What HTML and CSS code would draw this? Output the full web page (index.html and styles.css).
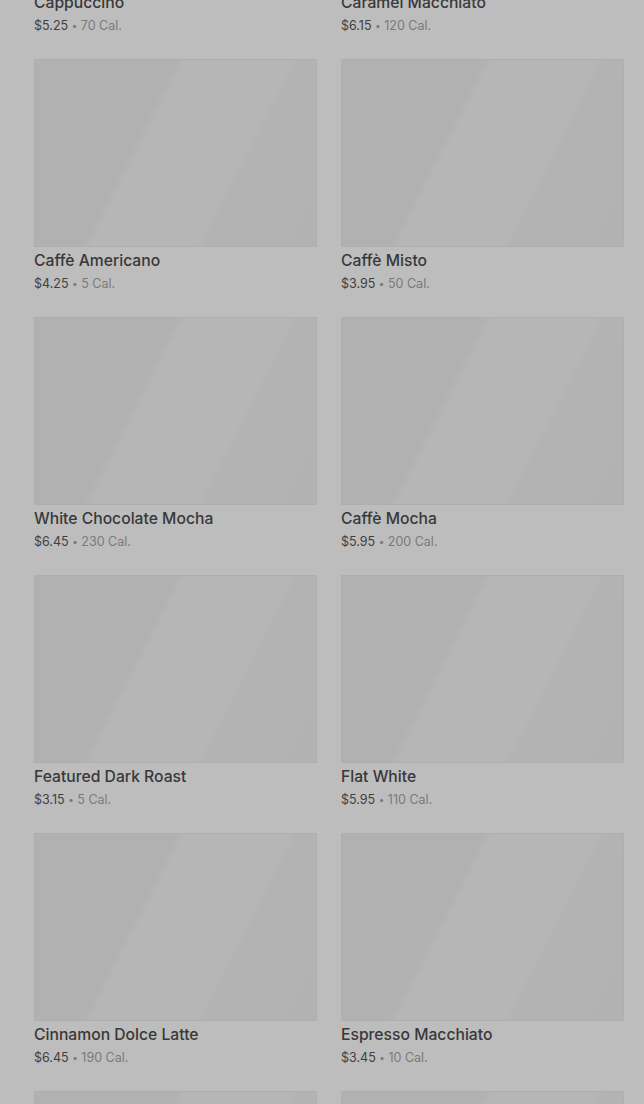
FILE: index.html
```html
<!DOCTYPE html>
<html lang="en">
<head>
<meta charset="utf-8">
<title>Menu</title>
<link rel="stylesheet" href="styles.css">
</head>
<body>
<main class="page">
  <ul class="grid">
    <li class="card"><div class="thumb"></div><h3 class="name">Cappuccino</h3><p class="meta"><span class="price">$5.25</span> <span class="dot">•</span> <span class="cal">70 Cal.</span></p></li>
    <li class="card"><div class="thumb"></div><h3 class="name">Caramel Macchiato</h3><p class="meta"><span class="price">$6.15</span> <span class="dot">•</span> <span class="cal">120 Cal.</span></p></li>
    <li class="card"><div class="thumb"></div><h3 class="name">Caffè Americano</h3><p class="meta"><span class="price">$4.25</span> <span class="dot">•</span> <span class="cal">5 Cal.</span></p></li>
    <li class="card"><div class="thumb"></div><h3 class="name">Caffè Misto</h3><p class="meta"><span class="price">$3.95</span> <span class="dot">•</span> <span class="cal">50 Cal.</span></p></li>
    <li class="card"><div class="thumb"></div><h3 class="name">White Chocolate Mocha</h3><p class="meta"><span class="price">$6.45</span> <span class="dot">•</span> <span class="cal">230 Cal.</span></p></li>
    <li class="card"><div class="thumb"></div><h3 class="name">Caffè Mocha</h3><p class="meta"><span class="price">$5.95</span> <span class="dot">•</span> <span class="cal">200 Cal.</span></p></li>
    <li class="card"><div class="thumb"></div><h3 class="name">Featured Dark Roast</h3><p class="meta"><span class="price">$3.15</span> <span class="dot">•</span> <span class="cal">5 Cal.</span></p></li>
    <li class="card"><div class="thumb"></div><h3 class="name">Flat White</h3><p class="meta"><span class="price">$5.95</span> <span class="dot">•</span> <span class="cal">110 Cal.</span></p></li>
    <li class="card"><div class="thumb"></div><h3 class="name">Cinnamon Dolce Latte</h3><p class="meta"><span class="price">$6.45</span> <span class="dot">•</span> <span class="cal">190 Cal.</span></p></li>
    <li class="card"><div class="thumb"></div><h3 class="name">Espresso Macchiato</h3><p class="meta"><span class="price">$3.45</span> <span class="dot">•</span> <span class="cal">10 Cal.</span></p></li>
    <li class="card"><div class="thumb"></div><h3 class="name">Iced Coffee</h3><p class="meta"><span class="price">$3.45</span> <span class="dot">•</span> <span class="cal">80 Cal.</span></p></li>
    <li class="card"><div class="thumb"></div><h3 class="name">Cold Brew</h3><p class="meta"><span class="price">$4.45</span> <span class="dot">•</span> <span class="cal">5 Cal.</span></p></li>
  </ul>
</main>
</body>
</html>
```
FILE: styles.css
```css
html, body {
  margin: 0;
  padding: 0;
  height: 100%;
  overflow: hidden;
  background: #bdbdbd;
}
body {
  font-family: Inter, "Noto Sans", "Liberation Sans", sans-serif;
}
.page {
  padding: 0 20px 0 34px;
}
.grid {
  list-style: none;
  margin: -199px 0 0 0;
  padding: 0;
  display: grid;
  grid-template-columns: 283px 283px;
  column-gap: 24px;
  row-gap: 24px;
}
.card {
  display: flex;
  flex-direction: column;
}
.thumb {
  height: 188px;
  background: linear-gradient(117deg, #b1b1b1 0%, #b1b1b1 38%, #b6b6b6 40%, #b6b6b6 68%, #b3b3b3 70%, #b2b2b2 100%);
  box-shadow: inset 0 0 0 1px #afafaf;
}
.name {
  margin: 4px 0 0;
  font-size: 15.7px;
  line-height: 20px;
  font-weight: 500;
  color: #383838;
}
.meta {
  margin: 4px 0 0;
  height: 18px;
  font-size: 12.5px;
  line-height: 18px;
  color: #7a7a7a;
}
.price {
  color: #3f3f3f;
}
.dot {
  font-size: 10px;
  line-height: 1;
  vertical-align: 1px;
}
```
